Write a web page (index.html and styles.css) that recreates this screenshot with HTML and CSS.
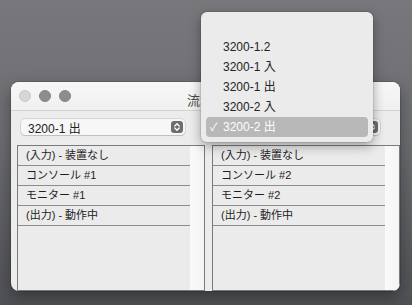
FILE: index.html
```html
<!DOCTYPE html>
<html lang="ja">
<head>
    <meta charset="UTF-8">
    <title>流れ図</title>
    <link rel="stylesheet" href="styles.css">
</head>
<body>
    <div class="desktop">
        <!-- Window -->
        <div class="window">
            <div class="titlebar">
                <div class="lights">
                    <span class="light light-close"></span>
                    <span class="light"></span>
                    <span class="light"></span>
                </div>
                <div class="title">流れ図</div>
            </div>

            <div class="panes">
                <div class="pane">
                    <div class="toolbar">
                        <div class="popup">
                            <span class="popup-label">3200-1 出</span>
                            <span class="stepper">
                                <svg width="12" height="12" viewBox="0 0 12 12"><path d="M3.8 5 6 2.8 8.2 5M3.8 7 6 9.2 8.2 7" fill="none" stroke="#fff" stroke-width="1.3" stroke-linecap="round" stroke-linejoin="round"/></svg>
                            </span>
                        </div>
                    </div>
                    <div class="list">
                        <div class="rows">
                            <div class="row">(入力) - 装置なし</div>
                            <div class="row">コンソール #1</div>
                            <div class="row">モニター #1</div>
                            <div class="row">(出力) - 動作中</div>
                        </div>
                        <div class="track"></div>
                    </div>
                </div>

                <div class="pane">
                    <div class="toolbar">
                        <div class="popup">
                            <span class="popup-label">3200-2 出</span>
                            <span class="stepper">
                                <svg width="12" height="12" viewBox="0 0 12 12"><path d="M3.8 5 6 2.8 8.2 5M3.8 7 6 9.2 8.2 7" fill="none" stroke="#fff" stroke-width="1.3" stroke-linecap="round" stroke-linejoin="round"/></svg>
                            </span>
                        </div>
                    </div>
                    <div class="list">
                        <div class="rows">
                            <div class="row">(入力) - 装置なし</div>
                            <div class="row">コンソール #2</div>
                            <div class="row">モニター #2</div>
                            <div class="row">(出力) - 動作中</div>
                        </div>
                        <div class="track"></div>
                    </div>
                </div>
            </div>
        </div>

        <!-- Open popup menu -->
        <div class="menu">
            <div class="menu-item"></div>
            <div class="menu-item">3200-1.2</div>
            <div class="menu-item">3200-1 入</div>
            <div class="menu-item">3200-1 出</div>
            <div class="menu-item">3200-2 入</div>
            <div class="menu-item selected"><span class="check">✓</span>3200-2 出</div>
        </div>
    </div>
</body>
</html>
```

FILE: styles.css
```css
* {
    margin: 0;
    padding: 0;
    box-sizing: border-box;
}

body {
    width: 412px;
    height: 305px;
    overflow: hidden;
    font-family: 'Liberation Sans', 'Noto Sans CJK JP', sans-serif;
    color: #222;
    background: linear-gradient(180deg, #78787c 0%, #6c6d71 45%, #505155 100%);
}

.desktop {
    position: relative;
    width: 412px;
    height: 305px;
}

/* Window */
.window {
    position: absolute;
    left: 11px;
    top: 82px;
    width: 389px;
    height: 209px;
    border-radius: 8px;
    overflow: hidden;
    background: #ececec;
    box-shadow: 0 6px 16px rgba(0, 0, 0, 0.35), 0 0 0 1px rgba(0, 0, 0, 0.12);
}

.titlebar {
    position: relative;
    height: 29px;
    background: linear-gradient(180deg, #f7f7f7, #f0f0f0);
    border-bottom: 1px solid #d3d3d3;
    display: flex;
    align-items: center;
}

.lights {
    display: flex;
    gap: 8px;
    padding-left: 8px;
}

.light {
    width: 12px;
    height: 12px;
    border-radius: 50%;
    background: #8d8d8d;
    border: 1px solid #848484;
}

.light-close {
    background: #d6d6d6;
    border-color: #c8c8c8;
}

.title {
    position: absolute;
    left: 176px;
    top: 8px;
    font-size: 13px;
    color: #4a4a4a;
}

.panes {
    display: flex;
    gap: 7px;
    padding-left: 6px;
}

.pane {
    width: 188px;
    flex-shrink: 0;
}

.toolbar {
    height: 34px;
    padding: 8px 0 0 4px;
}

.popup {
    width: 164px;
    height: 16px;
    border-radius: 4px;
    background: #f7f7f7;
    box-shadow: 0 0 0 0.5px rgba(0, 0, 0, 0.18), 0 1px 1px rgba(0, 0, 0, 0.12);
    display: flex;
    align-items: center;
    justify-content: space-between;
    padding: 0 2px 0 7px;
    font-size: 12px;
}

.stepper {
    width: 12px;
    height: 12px;
    border-radius: 3px;
    background: #6e6e6e;
    display: flex;
}

.list {
    height: 146px;
    border: 1px solid #7a7a7a;
    display: flex;
    background: #ebebeb;
}

.rows {
    width: 172px;
}

.row {
    height: 20px;
    line-height: 19px;
    border-bottom: 1px solid #8c8c8c;
    padding-left: 8px;
    font-size: 11px;
    color: #1e1e1e;
}

.track {
    flex: 1;
    background: linear-gradient(90deg, #fafafa, #f4f4f4);
}

/* Open menu */
.menu {
    position: absolute;
    left: 201px;
    top: 12px;
    width: 172px;
    padding: 5px;
    border-radius: 6px;
    background: #ebebeb;
    box-shadow: 0 0 0 1px rgba(0, 0, 0, 0.08), 0 4px 12px rgba(0, 0, 0, 0.35);
}

.menu-item {
    position: relative;
    height: 20px;
    line-height: 20px;
    padding-left: 17px;
    font-size: 12px;
    color: #232323;
    border-radius: 4px;
}

.menu-item.selected {
    background: #b8b8b8;
    color: #fff;
}

.check {
    position: absolute;
    left: 4px;
    top: 0;
    font-size: 11px;
}
```
